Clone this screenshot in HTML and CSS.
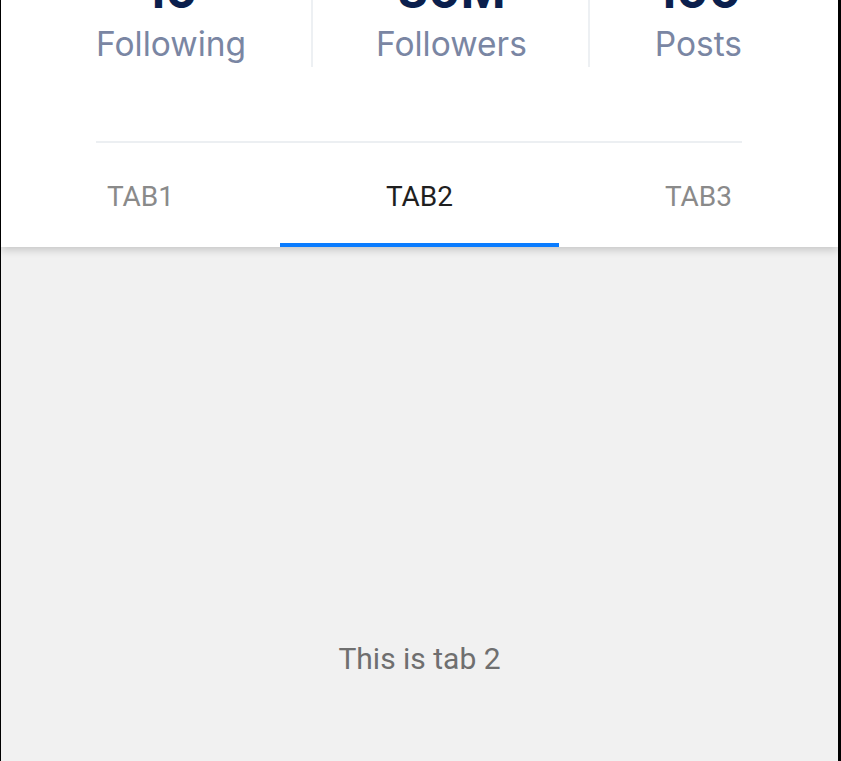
FILE: index.html
```html
<!DOCTYPE html>
<html>
<head>
<meta charset="utf-8">
<link rel="stylesheet" href="styles.css">
</head>
<body>
<div class="screen">
  <header class="profile">
    <div class="stats">
      <div class="stat">
        <div class="stat-num">10</div>
        <div class="stat-label">Following</div>
      </div>
      <div class="stat stat-mid">
        <div class="stat-num">30M</div>
        <div class="stat-label">Followers</div>
      </div>
      <div class="stat">
        <div class="stat-num">100</div>
        <div class="stat-label">Posts</div>
      </div>
    </div>
    <div class="divider"></div>
    <nav class="tabs">
      <div class="tab">TAB1</div>
      <div class="tab tab-active">TAB2</div>
      <div class="tab">TAB3</div>
    </nav>
  </header>
  <main class="content">
    <p class="content-text">This is tab 2</p>
  </main>
</div>
</body>
</html>
```

FILE: styles.css
```css
html, body {
  margin: 0;
  padding: 0;
  height: 100%;
  background: #000;
  overflow: hidden;
}
.screen {
  margin: 0 3px 0 1px;
  height: 761px;
  background: #f1f1f1;
  display: flex;
  flex-direction: column;
  overflow: hidden;
}
.profile {
  background: #fff;
  position: relative;
  z-index: 1;
  box-shadow: 0 3px 8px rgba(0,0,0,0.18);
  margin-top: -37px;
}
.stats {
  display: flex;
  justify-content: space-between;
  padding: 0 96px 0 95px;
}
.stat {
  display: flex;
  flex-direction: column;
  align-items: center;
  padding-bottom: 3px;
}
.stat-mid {
  border-left: 2px solid #edf0f3;
  border-right: 2px solid #edf0f3;
  padding-left: 63px;
  padding-right: 61px;
}
.stat-num {
  font-family: Inter, sans-serif;
  font-weight: 700;
  font-size: 48px;
  line-height: 56px;
  color: #0b1f4d;
}
.stat-label {
  margin-top: 5px;
  font-family: Inter, sans-serif;
  font-size: 33.5px;
  line-height: 40px;
  color: #7a86a3;
}
.divider {
  height: 2px;
  background: #eceff2;
  margin: 74px 96px 0 95px;
}
.tabs {
  display: flex;
}
.tab {
  flex: 1;
  height: 104px;
  padding-top: 7px;
  display: flex;
  align-items: center;
  justify-content: center;
  font-family: Roboto, sans-serif;
  font-size: 28px;
  color: #8a8a8a;
  box-sizing: border-box;
  border-bottom: 4px solid transparent;
}
.tab-active {
  color: #1f1f1f;
  border-bottom-color: #0a7cff;
}
.content {
  flex: 1;
}
.content-text {
  margin: 0;
  padding-top: 394px;
  text-align: center;
  font-family: Roboto, sans-serif;
  font-size: 30px;
  line-height: 36px;
  color: #6f6f6f;
}
```
